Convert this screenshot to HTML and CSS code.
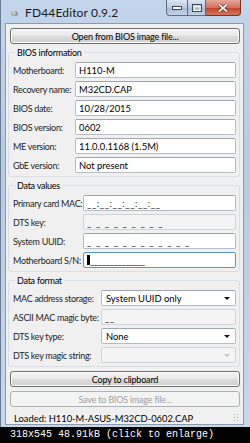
FILE: index.html
```html
<!DOCTYPE html>
<html>
<head>
<meta charset="utf-8">
<link rel="stylesheet" href="styles.css">
</head>
<body>
<div class="screen">
  <div class="window">
    <div class="titlebar">
      <span class="appicon"></span>
      <span class="title">FD44Editor 0.9.2</span>
      <div class="caption-btns">
        <span class="cb min"><svg width="10" height="4" viewBox="0 0 10 4"><rect x="0.5" y="0.5" width="9" height="3" fill="#fff" stroke="#3b4a5e"/></svg></span>
        <span class="cb max"><svg width="10" height="8" viewBox="0 0 10 8"><rect x="0.5" y="0.5" width="9" height="7" fill="none" stroke="#3b4a5e"/><rect x="2" y="2.5" width="6" height="4" fill="none" stroke="#fff"/></svg></span>
        <span class="cb close"><svg width="10" height="8" viewBox="0 0 10 8"><path d="M1 0.5 L9 7.5 M9 0.5 L1 7.5" stroke="#3a1a14" stroke-width="3"/><path d="M1 0.5 L9 7.5 M9 0.5 L1 7.5" stroke="#fff" stroke-width="1.8"/></svg></span>
      </div>
    </div>
    <div class="client">
      <div class="btn">Open from BIOS image file...</div>

      <div class="group g1">
        <div class="gtitle">BIOS information</div>
        <div class="grid">
          <span class="lbl">Motherboard:</span><div class="field">H110-M</div>
          <span class="lbl">Recovery name:</span><div class="field">M32CD.CAP</div>
          <span class="lbl">BIOS date:</span><div class="field">10/28/2015</div>
          <span class="lbl">BIOS version:</span><div class="field">0602</div>
          <span class="lbl">ME version:</span><div class="field">11.0.0.1168 (1.5M)</div>
          <span class="lbl">GbE version:</span><div class="field">Not present</div>
        </div>
      </div>

      <div class="group g2">
        <div class="gtitle">Data values</div>
        <div class="grid">
          <span class="lbl">Primary card MAC:</span><div class="field"><span class="mask">__:__:__:__:__:__</span></div>
          <span class="lbl">DTS key:</span><div class="field disabled"><span class="mask wide">_________</span></div>
          <span class="lbl">System UUID:</span><div class="field"><span class="mask wide">____________</span></div>
          <span class="lbl">Motherboard S/N:</span><div class="field focus"><span class="caret"></span><span class="mask solid">______________</span></div>
        </div>
      </div>

      <div class="group g3">
        <div class="gtitle">Data format</div>
        <div class="grid">
          <span class="lbl">MAC address storage:</span><div class="field combo">System UUID only<span class="arrow"></span></div>
          <span class="lbl">ASCII MAC magic byte:</span><div class="field disabled"><span class="mask">__</span></div>
          <span class="lbl">DTS key type:</span><div class="field combo">None<span class="arrow"></span></div>
          <span class="lbl">DTS key magic string:</span><div class="field combo disabled"><span class="arrow light"></span></div>
        </div>
      </div>

      <div class="btn copy">Copy to clipboard</div>
      <div class="btn off">Save to BIOS image file...</div>
      <div class="status"><span>Loaded: H110-M-ASUS-M32CD-0602.CAP</span><span class="grip"></span></div>
    </div>
  </div>
  <div class="caption">318x545 48.91kB (click to enlarge)</div>
</div>
</body>
</html>
```

FILE: styles.css
```css
* { box-sizing: border-box; }
html, body { margin: 0; padding: 0; background: #000; }
.screen { width: 250px; height: 443px; display: flex; flex-direction: column; overflow: hidden; }

.window {
  height: 427px;
  background: linear-gradient(to bottom, #c2d5ea 0%, #b7cbe2 40%, #c6d8ec 100%);
  border-left: 1px solid #6a7c94;
  padding: 0 6px 5px 4px;
  display: flex; flex-direction: column;
  font-family: Lato, "Open Sans", sans-serif;
  font-size: 9px;
  color: #000;
}

.titlebar { height: 23px; display: flex; align-items: center; position: relative; flex-shrink: 0; }
.appicon {
  width: 7px; height: 5px; margin-left: 6px; margin-top: 4px;
  background: radial-gradient(circle at 40% 40%, #d8d8d8, #6d6d6d);
  border-radius: 50%;
}
.title { margin-left: 7px; font-size: 12px; letter-spacing: 0.15px; color: #1a1a1a; margin-top: 2px; }
.caption-btns { position: absolute; right: 3px; top: 0; display: flex; }
.cb { height: 16px; display: flex; align-items: center; justify-content: center; border: 1px solid #5c6c82; border-top: none; }
.cb.min { width: 22px; border-radius: 0 0 0 4px; background: linear-gradient(#dce6f2, #b8c9dd 50%, #a6b9d1 51%, #c2d3e8); }
.cb.max { width: 18px; border-left: none; background: linear-gradient(#dce6f2, #b8c9dd 50%, #a6b9d1 51%, #c2d3e8); }
.cb.close { width: 35px; border-left: none; border-radius: 0 0 4px 0; background: linear-gradient(#e6a89a, #d4705d 50%, #c0402a 51%, #d5765c); border-color: #7a3024; }

.client {
  flex: 1;
  background: #f0f0f0;
  border: 1px solid #8a9bb0;
  padding: 4px 3px 0 4px;
  display: flex; flex-direction: column;
}

.btn {
  height: 16px; flex-shrink: 0;
  border: 1px solid #707070; border-radius: 3px;
  background: linear-gradient(#f2f2f2 0%, #ebebeb 45%, #dddddd 50%, #cfcfcf 100%);
  box-shadow: inset 0 0 0 1px #fcfcfc;
  display: flex; align-items: center; justify-content: center;
  color: #000; letter-spacing: -0.2px;
}
.btn.copy { margin-top: 4px; }
.btn.off { margin-top: 4px; background: #f4f4f4; border-color: #adb2b5; color: #a0a0a0; box-shadow: none; }

.group {
  border: 1px solid #d5dfe5; border-radius: 3px;
  margin: 0 0 0 -2px;
  padding: 0 3px 3px 2px;
  flex-shrink: 0;
}
.g1 { margin-top: 8px; }
.g2 { margin-top: 8px; }
.g3 { margin-top: 8px; }
.gtitle {
  width: fit-content; margin: -7px 0 0 4px; padding: 0 2px;
  background: #f0f0f0; height: 13px; line-height: 13px; letter-spacing: -0.25px;
}
.grid { display: grid; row-gap: 3px; margin-top: 3px; }
.g1 .grid { grid-template-columns: 64px 1fr; }
.g2 .grid { grid-template-columns: 72px 1fr; }
.g3 .grid { grid-template-columns: 90px 1fr; }
.lbl { display: flex; align-items: center; padding-left: 2px; white-space: nowrap; color: #1e1e1e; letter-spacing: -0.3px; }

.field {
  height: 16px; background: #fff; font-size: 9.4px;
  border: 1px solid #b4bcc6; border-top-color: #9ea6b0; border-radius: 2px;
  display: flex; align-items: center; padding-left: 3px; position: relative;
  white-space: nowrap;
}
.field.disabled { background: #f4f4f4; border-color: #d0d4d8; }
.field.focus { border-color: #5b9bd0; }
.mask { letter-spacing: 0.6px; color: #222; }
.mask.wide { letter-spacing: 4.6px; }
.mask.solid { letter-spacing: -0.4px; }
.caret { width: 3px; height: 10px; background: #000; }
.combo { padding-left: 4px; }
.arrow {
  position: absolute; right: 5px; top: 6px;
  border-left: 3px solid transparent; border-right: 3px solid transparent; border-top: 3px solid #111;
}
.arrow.light { border-top-color: #c4c4c4; }

.status {
  flex: 1; display: flex; align-items: center; justify-content: space-between;
  padding: 4px 0 0 4px; margin-top: 2px; font-size: 9.4px;
}
.grip {
  width: 6px; height: 10px; align-self: flex-end; margin-bottom: 1px; margin-right: 1px;
  background-image: radial-gradient(circle, #a8a8a8 0.8px, transparent 1px);
  background-size: 3px 3px;
}

.caption {
  height: 16px; background: #000; color: #fff;
  font-family: "Liberation Mono", "DejaVu Sans Mono", monospace; font-size: 10px;
  line-height: 16px; padding-left: 10px; white-space: pre;
}
```
